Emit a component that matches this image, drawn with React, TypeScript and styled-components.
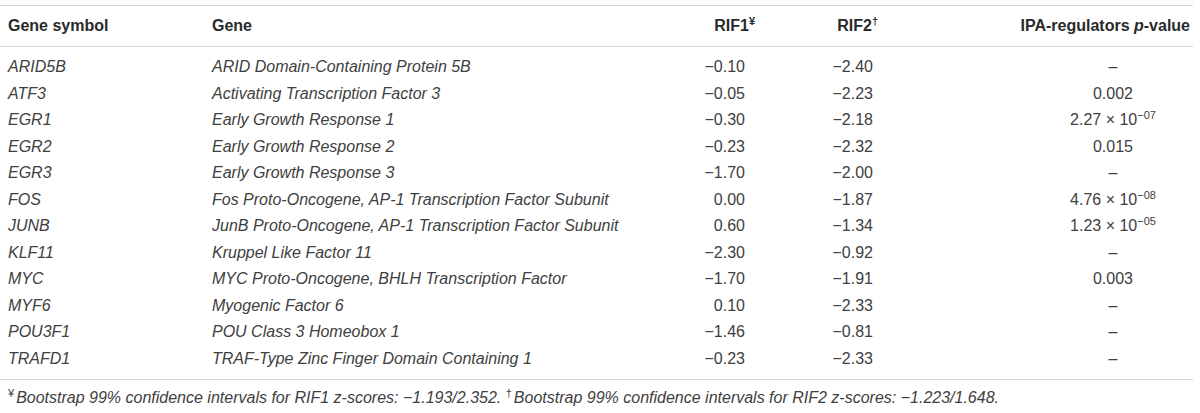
import React from "react";
import styled, { createGlobalStyle } from "styled-components";

const Global = createGlobalStyle`
  html, body { margin: 0; padding: 0; background: #ffffff; }
  body { font-family: "Liberation Sans", Arial, sans-serif; color: #404040; }
`;

const Wrap = styled.div`
  width: 1193px;
  padding-top: 5px;
`;

const Table = styled.table`
  width: 100%;
  border-collapse: collapse;
  table-layout: fixed;
  border-top: 1px solid #d6d6d6;
  border-bottom: 1px solid #d6d6d6;
  font-size: 16px;
`;

type Align = "left" | "right" | "center";

const Th = styled.th<{ $align?: Align; $pr?: number }>`
  font-weight: 700;
  color: #2a2a2a;
  line-height: 16px;
  text-align: ${(p) => p.$align || "left"};
  padding: 12px ${(p) => p.$pr ?? 8}px 12px 8px;
  border-bottom: 1px solid #d6d6d6;
  white-space: nowrap;
`;

const Tr = styled.tr`
  &:first-child td { padding-top: 12px; }
  &:last-child td { padding-bottom: 12px; }
`;

const Td = styled.td<{ $italic?: boolean; $align?: Align; $pr?: number; $pl?: number }>`
  font-style: ${(p) => (p.$italic ? "italic" : "normal")};
  text-align: ${(p) => p.$align || "left"};
  line-height: 16.5px;
  padding: 5px ${(p) => p.$pr ?? 8}px 5px ${(p) => p.$pl ?? 8}px;
  white-space: nowrap;
`;

const Mark = styled.sup<{ $hang?: number }>`
  font-size: 11px;
  line-height: 0;
  vertical-align: 6px;
  margin-right: ${(p) => (p.$hang ? -p.$hang : 0)}px;
`;

const Exp = styled.sup`
  font-size: 11px;
  line-height: 0;
  vertical-align: 6px;
`;

const Foot = styled.p`
  margin: 0;
  padding: 10px 8px 0 8px;
  font-size: 16px;
  font-style: italic;
  line-height: 16px;
`;

const FootMark = styled.sup`
  font-style: normal;
  font-size: 11px;
  line-height: 0;
  vertical-align: 6px;
  margin-right: 2px;
`;

type Row = { sym: string; gene: string; r1: string; r2: string; p: React.ReactNode };

const sci = (m: string, e: string) => (
  <>
    {m} × 10<Exp>−{e}</Exp>
  </>
);

const rows: Row[] = [
  { sym: "ARID5B", gene: "ARID Domain-Containing Protein 5B", r1: "−0.10", r2: "−2.40", p: "–" },
  { sym: "ATF3", gene: "Activating Transcription Factor 3", r1: "−0.05", r2: "−2.23", p: "0.002" },
  { sym: "EGR1", gene: "Early Growth Response 1", r1: "−0.30", r2: "−2.18", p: sci("2.27", "07") },
  { sym: "EGR2", gene: "Early Growth Response 2", r1: "−0.23", r2: "−2.32", p: "0.015" },
  { sym: "EGR3", gene: "Early Growth Response 3", r1: "−1.70", r2: "−2.00", p: "–" },
  { sym: "FOS", gene: "Fos Proto-Oncogene, AP-1 Transcription Factor Subunit", r1: "0.00", r2: "−1.87", p: sci("4.76", "08") },
  { sym: "JUNB", gene: "JunB Proto-Oncogene, AP-1 Transcription Factor Subunit", r1: "0.60", r2: "−1.34", p: sci("1.23", "05") },
  { sym: "KLF11", gene: "Kruppel Like Factor 11", r1: "−2.30", r2: "−0.92", p: "–" },
  { sym: "MYC", gene: "MYC Proto-Oncogene, BHLH Transcription Factor", r1: "−1.70", r2: "−1.91", p: "0.003" },
  { sym: "MYF6", gene: "Myogenic Factor 6", r1: "0.10", r2: "−2.33", p: "–" },
  { sym: "POU3F1", gene: "POU Class 3 Homeobox 1", r1: "−1.46", r2: "−0.81", p: "–" },
  { sym: "TRAFD1", gene: "TRAF-Type Zinc Finger Domain Containing 1", r1: "−0.23", r2: "−2.33", p: "–" },
];

export default function App() {
  return (
    <Wrap>
      <Global />
      <Table>
        <colgroup>
          <col style={{ width: 204 }} />
          <col style={{ width: 436 }} />
          <col style={{ width: 120 }} />
          <col style={{ width: 128 }} />
          <col />
        </colgroup>
        <thead>
          <tr>
            <Th>Gene symbol</Th>
            <Th>Gene</Th>
            <Th $align="right" $pr={15}>
              RIF1<Mark $hang={10}>¥</Mark>
            </Th>
            <Th $align="right" $pr={15}>
              RIF2<Mark $hang={5}>†</Mark>
            </Th>
            <Th $align="right" $pr={3}>
              IPA-regulators <i>p</i>-value
            </Th>
          </tr>
        </thead>
        <tbody>
          {rows.map((r) => (
            <Tr key={r.sym}>
              <Td $italic>{r.sym}</Td>
              <Td $italic>{r.gene}</Td>
              <Td $align="right" $pr={15}>{r.r1}</Td>
              <Td $align="right" $pr={15}>{r.r2}</Td>
              <Td $align="center" $pl={145} $pr={0}>{r.p}</Td>
            </Tr>
          ))}
        </tbody>
      </Table>
      <Foot>
        <FootMark>¥</FootMark>Bootstrap 99% confidence intervals for RIF1 z-scores: −1.193/2.352.{" "}
        <FootMark>†</FootMark>Bootstrap 99% confidence intervals for RIF2 z-scores: −1.223/1.648.
      </Foot>
    </Wrap>
  );
}
